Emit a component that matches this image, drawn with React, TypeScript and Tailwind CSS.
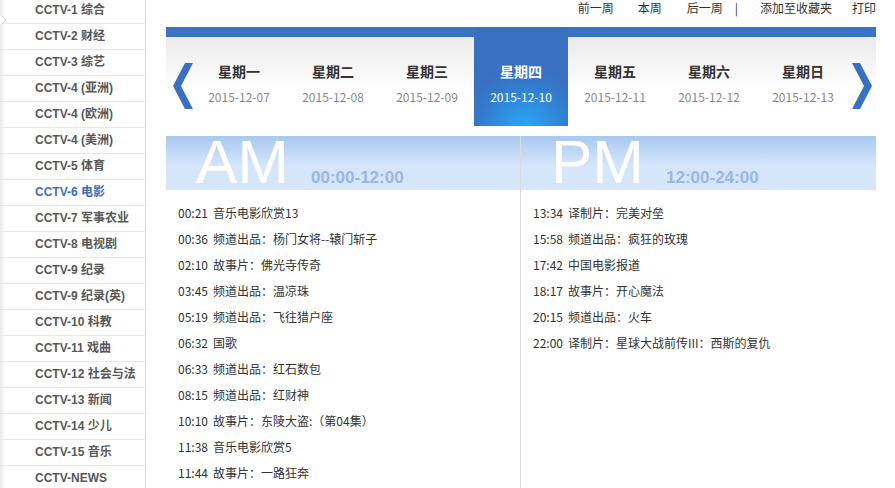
import React from "react"

const channels = [
  "CCTV-1 综合",
  "CCTV-2 财经",
  "CCTV-3 综艺",
  "CCTV-4 (亚洲)",
  "CCTV-4 (欧洲)",
  "CCTV-4 (美洲)",
  "CCTV-5 体育",
  "CCTV-6 电影",
  "CCTV-7 军事农业",
  "CCTV-8 电视剧",
  "CCTV-9 纪录",
  "CCTV-9 纪录(英)",
  "CCTV-10 科教",
  "CCTV-11 戏曲",
  "CCTV-12 社会与法",
  "CCTV-13 新闻",
  "CCTV-14 少儿",
  "CCTV-15 音乐",
  "CCTV-NEWS",
]

const days = [
  ["星期一", "2015-12-07"],
  ["星期二", "2015-12-08"],
  ["星期三", "2015-12-09"],
  ["星期四", "2015-12-10"],
  ["星期五", "2015-12-11"],
  ["星期六", "2015-12-12"],
  ["星期日", "2015-12-13"],
]

const amList = [
  ["00:21", "音乐电影欣赏13"],
  ["00:36", "频道出品：杨门女将--辕门斩子"],
  ["02:10", "故事片：佛光寺传奇"],
  ["03:45", "频道出品：温凉珠"],
  ["05:19", "频道出品：飞往猎户座"],
  ["06:32", "国歌"],
  ["06:33", "频道出品：红石数包"],
  ["08:15", "频道出品：红财神"],
  ["10:10", "故事片：东陵大盗:（第04集）"],
  ["11:38", "音乐电影欣赏5"],
  ["11:44", "故事片：一路狂奔"],
]

const pmList = [
  ["13:34", "译制片：完美对垒"],
  ["15:58", "频道出品：疯狂的玫瑰"],
  ["17:42", "中国电影报道"],
  ["18:17", "故事片：开心魔法"],
  ["20:15", "频道出品：火车"],
  ["22:00", "译制片：星球大战前传III：西斯的复仇"],
]

const cjk = "font-['Noto_Sans_CJK_SC',sans-serif]"

const Arrow = ({ dir }: { dir: "left" | "right" }) => (
  <svg width="20" height="46" viewBox="0 0 20 46" className="shrink-0">
    <polygon
      points={dir === "left" ? "12,0 20,0 8,23 20,46 12,46 0,23" : "0,0 8,0 20,23 8,46 0,46 12,23"}
      fill="#3a70c2"
    />
  </svg>
)

const Column = ({
  label,
  range,
  items,
  className,
}: {
  label: string
  range: string
  items: string[][]
  className: string
}) => (
  <div className={className}>
    <div className="h-[54px] bg-[linear-gradient(to_bottom,#a9c8ef,#d5e6fb_55%,#d5e6fb)] pl-[30px]">
      <div className="h-[51px] leading-[51px] whitespace-nowrap font-['Liberation_Sans',sans-serif]">
        <span className="inline-block h-[51px] text-[62px] leading-[51px] text-white">{label}</span>
        <span className="ml-[22px] inline-block text-[17px] font-bold leading-[20px] text-[#9ab7e2]">{range}</span>
      </div>
    </div>
    <ul className={`pt-[10px] text-[12px] text-[#333] ${cjk}`}>
      {items.map(([t, name]) => (
        <li key={t} className="h-[26px] leading-[26px] pl-[12px] whitespace-nowrap">
          <span className="mr-[5px]">{t}</span>
          {name}
        </li>
      ))}
    </ul>
  </div>
)

export default function App() {
  return (
    <div className="flex w-[895px] h-[488px] overflow-hidden bg-white">
      <aside className="relative w-[146px] shrink-0 border-r border-[#dedede]">
        <div className="absolute left-0 top-0 h-full w-[5px] bg-[linear-gradient(to_right,#e9e9e9,#ffffff00)]" />
        <svg className="absolute left-0 top-[14px]" width="7" height="12" viewBox="0 0 7 12">
          <polyline points="0,0 6,6 0,12" fill="#fff" stroke="#e2e2e2" strokeWidth="1" />
        </svg>
        <ul className="-mt-[2px] font-['Liberation_Sans','Noto_Sans_CJK_SC',sans-serif] text-[12px] font-bold">
          {channels.map((c) => (
            <li
              key={c}
              className={`h-[26px] border-b border-[#e8e8e8] pl-[35px] leading-[25px] whitespace-nowrap ${
                c === "CCTV-6 电影" ? "text-[#3a6fc0]" : "text-[#585858]"
              }`}
            >
              {c}
            </li>
          ))}
        </ul>
      </aside>

      <main className="ml-[20px] w-[710px] shrink-0">
        <div className={`flex h-[27px] justify-end text-[12px] leading-[16px] text-[#333] ${cjk}`}>
          <span>前一周</span>
          <span className="ml-[24px]">本周</span>
          <span className="ml-[25px]">后一周</span>
          <span className="ml-[12px]">|</span>
          <span className="ml-[22px]">添加至收藏夹</span>
          <span className="ml-[20px]">打印</span>
        </div>

        <div className="flex h-[99px] border-t-[10px] border-[#3a72c4] bg-[linear-gradient(to_bottom,#eaeaea,#ffffff_60%)]">
          <div className="w-[26px] pl-[7px] pt-[26px]">
            <Arrow dir="left" />
          </div>
          {days.map(([name, date], i) => {
            const active = i === 3
            return (
              <div
                key={name}
                className={`flex w-[94px] flex-col items-center ${cjk} ${
                  active
                    ? "-mt-[10px] h-[99px] pt-[34px] bg-[radial-gradient(ellipse_70%_60%_at_55%_100%,#2aa6f6_0%,#3478c9_75%,#3a70c2_100%)] text-white"
                    : "pt-[24px]"
                }`}
              >
                <div className={`text-[14px] font-bold leading-[20px] ${active ? "text-white" : "text-[#333]"}`}>{name}</div>
                <div className={`mt-[8px] text-[12px] leading-[16px] ${active ? "text-white" : "text-[#888]"}`}>{date}</div>
              </div>
            )
          })}
          <div className="ml-[2px] pt-[26px]">
            <Arrow dir="right" />
          </div>
        </div>

        <div className="mt-[10px] flex">
          <Column label="AM" range="00:00-12:00" items={amList} className="w-[355px] h-[360px] border-r border-[#dcdcdc]" />
          <Column label="PM" range="12:00-24:00" items={pmList} className="flex-1" />
        </div>
      </main>
    </div>
  )
}
